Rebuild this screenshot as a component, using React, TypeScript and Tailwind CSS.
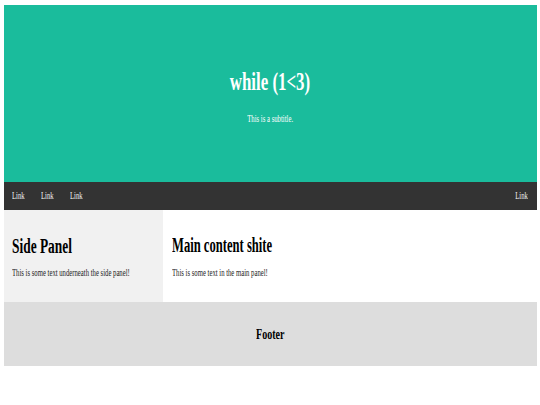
export default function App() {
  return (
    <div
      className="w-[540px] h-[405px] bg-white pt-[4.5px] pl-[3.5px] pr-[3.5px]"
      style={{ fontFamily: '"Liberation Serif", "Times New Roman", serif' }}
    >
      {/* Header */}
      <header className="h-[177.5px] bg-[#1abc9c] flex flex-col items-center pt-[64.5px] text-white">
        <h1 className="text-[26px] leading-none font-bold">
          <span className="inline-block scale-x-[0.65]">while (1&lt;3)</span>
        </h1>
        <p className="mt-[19px] text-[10px] leading-none">
          <span className="inline-block scale-x-[0.67]">This is a subtitle.</span>
        </p>
      </header>

      {/* Top nav */}
      <nav className="h-[28px] bg-[#333333] flex items-center pl-[8.5px] pr-[9px] text-[10px] leading-none text-[#f2f2f2]">
        <div className="flex gap-[10px]">
          <a className="inline-block origin-left scale-x-[0.67]">Link</a>
          <a className="inline-block origin-left scale-x-[0.67]">Link</a>
          <a className="inline-block origin-left scale-x-[0.67]">Link</a>
        </div>
        <a className="ml-auto inline-block origin-right scale-x-[0.67]">Link</a>
      </nav>

      {/* Row */}
      <div className="flex h-[92px]">
        <aside className="w-[30%] bg-[#f1f1f1] pl-[8.5px] pt-[26px]">
          <h2 className="text-[20px] leading-none font-bold text-black">
            <span className="inline-block origin-left scale-x-[0.67] whitespace-nowrap">Side Panel</span>
          </h2>
          <p className="mt-[12px] text-[10px] leading-none text-[#222]">
            <span className="inline-block origin-left scale-x-[0.67] whitespace-nowrap">
              This is some text underneath the side panel!
            </span>
          </p>
        </aside>
        <main className="flex-1 bg-white pl-[8.5px] pt-[25px]">
          <h2 className="text-[20px] leading-none font-bold text-black">
            <span className="inline-block origin-left scale-x-[0.63] whitespace-nowrap">Main content shite</span>
          </h2>
          <p className="mt-[13px] text-[10px] leading-none text-[#222]">
            <span className="inline-block origin-left scale-x-[0.67] whitespace-nowrap">
              This is some text in the main panel!
            </span>
          </p>
        </main>
      </div>

      {/* Footer */}
      <footer className="h-[64px] bg-[#dddddd] flex items-center justify-center text-[15px] leading-none font-bold text-black">
        <span className="inline-block scale-x-[0.67]">Footer</span>
      </footer>
    </div>
  )
}
